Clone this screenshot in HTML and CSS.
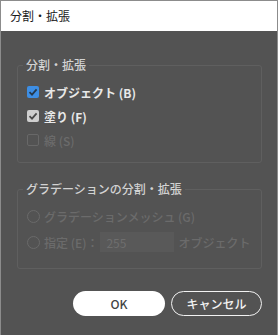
FILE: index.html
```html
<!DOCTYPE html>
<html lang="ja">

<head>
    <meta charset="UTF-8">
    <title>分割・拡張</title>
    <link rel="stylesheet" href="styles.css">
</head>

<body>
    <div class="dialog">
        <div class="titlebar">分割・拡張</div>
        <div class="content">
            <fieldset class="group">
                <legend>分割・拡張</legend>
                <div class="row">
                    <span class="check check-on">
                        <svg width="10" height="10" viewBox="0 0 10 10"><path d="M1.5 5.2 L4 7.6 L8.6 2.4" fill="none" stroke="#24384c" stroke-width="1.8"/></svg>
                    </span>
                    <span class="label">オブジェクト (B)</span>
                </div>
                <div class="row">
                    <span class="check check-gray">
                        <svg width="10" height="10" viewBox="0 0 10 10"><path d="M1.5 5.2 L4 7.6 L8.6 2.4" fill="none" stroke="#4a4a4a" stroke-width="1.8"/></svg>
                    </span>
                    <span class="label">塗り (F)</span>
                </div>
                <div class="row disabled">
                    <span class="check check-off"></span>
                    <span class="label">線 (S)</span>
                </div>
            </fieldset>

            <fieldset class="group group-grad">
                <legend>グラデーションの分割・拡張</legend>
                <div class="row row-tall disabled">
                    <span class="radio"></span>
                    <span class="label">グラデーションメッシュ (G)</span>
                </div>
                <div class="row row-tall disabled">
                    <span class="radio"></span>
                    <span class="label">指定 (E)：</span>
                    <input class="field" type="text" value="255" disabled>
                    <span class="label">オブジェクト</span>
                </div>
            </fieldset>

            <div class="actions">
                <button class="btn btn-ok">OK</button>
                <button class="btn btn-cancel">キャンセル</button>
            </div>
        </div>
    </div>
</body>

</html>
```

FILE: styles.css
```css
* {
    box-sizing: border-box;
}

body {
    margin: 0;
    background: #535353;
    font-family: "Noto Sans CJK JP", "Noto Sans", sans-serif;
    font-size: 12px;
}

.dialog {
    width: 278px;
    height: 335px;
    border: 1px solid #8c8c8c;
    border-bottom: none;
    background: #535353;
}

.titlebar {
    height: 30px;
    line-height: 30px;
    padding-left: 9px;
    background: #fff;
    color: #1a1a1a;
    font-size: 12px;
}

.content {
    padding: 0 15px 0 16px;
}

.group {
    margin: 26px 0 0;
    padding: 7px 8px 10px 5px;
    border: 1px solid #5f5f5f;
    border-radius: 3px;
    min-width: 0;
}

.group legend {
    padding: 0 3px;
    line-height: 16px;
    color: #d2d2d2;
    font-weight: 500;
}

.group-grad {
    margin-top: 18px;
    padding-top: 6px;
    padding-bottom: 13px;
}

.row {
    display: flex;
    align-items: center;
    height: 24px;
    padding-left: 4px;
    color: #e8e8e8;
    font-weight: 700;
}

.row-tall {
    height: 26px;
}

.row.disabled {
    color: #6b6b6b;
    font-weight: 500;
}

.label {
    white-space: nowrap;
}

.check {
    width: 12px;
    height: 12px;
    border-radius: 2px;
    margin-right: 5px;
    display: flex;
    align-items: center;
    justify-content: center;
}

.check-on {
    background: #3d8ee4;
}

.check-gray {
    background: #cfcfcf;
}

.check-off {
    border: 1px solid #686868;
}

.radio {
    width: 13px;
    height: 13px;
    border: 1px solid #6a6a6a;
    border-radius: 50%;
    margin-right: 4px;
}

.field {
    width: 74px;
    height: 20px;
    margin: 0 4px 0 2px;
    padding: 0 0 0 6px;
    border: none;
    background: #595959;
    color: #6e6e6e;
    font-family: inherit;
    font-size: 12px;
}

.actions {
    display: flex;
    justify-content: flex-end;
    gap: 6px;
    margin-top: 22px;
}

.btn {
    height: 25px;
    border-radius: 13px;
    font-family: inherit;
    font-size: 12px;
    font-weight: 500;
    cursor: pointer;
}

.btn-ok {
    width: 92px;
    border: none;
    background: #fff;
    color: #444;
}

.btn-cancel {
    width: 91px;
    border: 1.5px solid #f2f2f2;
    background: transparent;
    color: #f2f2f2;
}
```
